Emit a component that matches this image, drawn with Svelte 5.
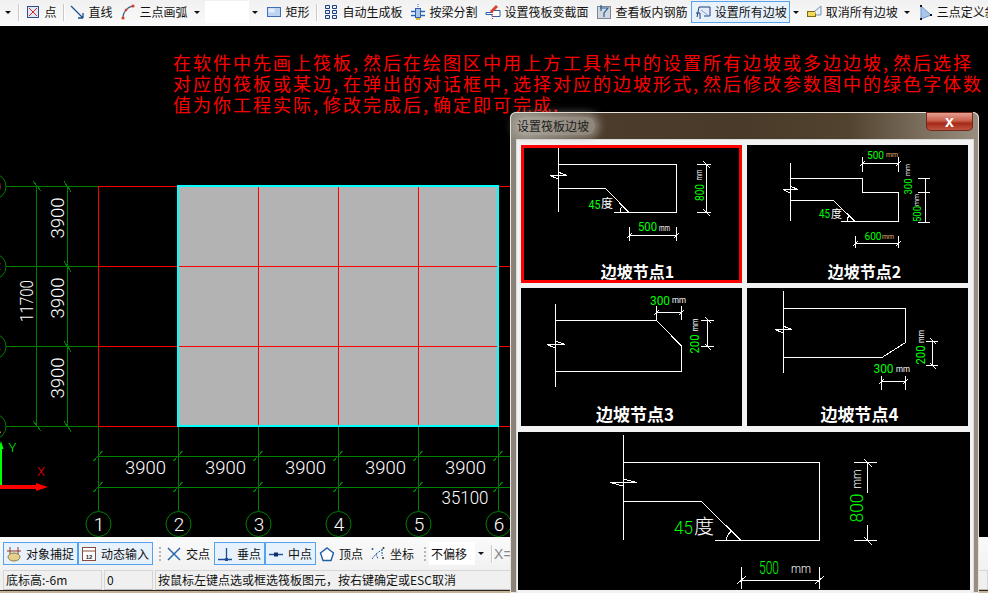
<script>
  const brk = (x, y, w, v) =>
    `M${x} ${y}H${x + w}M${x} ${y}L${v} ${y + 3.5}M${v} ${y - 3.5}L${x + w} ${y}`;

  const G = '#00ff00';
  const W = '#ffffff';
  const O = '#e8b070';

  const panels = [
    {
      vb: '521 145 221 138', cls: 'panel selected', title: '边坡节点1', tx: 637.5, ty: 271, ts: 16,
      d: 'M558.5 148V212M558.5 164.5H676.5V212.5H614M558.5 188.5H605.5L629 212.5M620 212A9 9 0 0 1 622.5 206' +
        brk(550, 175.5, 17, 558) +
        'M706.5 164V213M697 164.5H711M697 212.5H711M703 161L710 168M703 209L710 216' +
        'M630 235.5H676.5M629.5 227V241M676.5 227V241M627 238L632 233M674 238L679 233',
      texts: [
        { x: 594.5, y: 204, t: '45', s: 13, f: G, w: 12 },
        { x: 607, y: 204, t: '度', s: 12, f: W },
        { x: 699, y: 192.5, t: '800', s: 13, f: G, w: 17, r: 1 },
        { x: 699, y: 175, t: 'mm', s: 9, f: W, w: 11, r: 1 },
        { x: 647.5, y: 226.5, t: '500', s: 13, f: G, w: 19 },
        { x: 664.5, y: 228, t: 'mm', s: 9, f: W, w: 11 }
      ]
    },
    {
      vb: '747 145 221 138', cls: 'panel', title: '边坡节点2', tx: 864.5, ty: 271, ts: 16,
      d: 'M790.5 163V221M790.5 178.5H862.5V192.5H898.5V221.5H841M790.5 200.5H833.5L855 221.5M847 221A8 8 0 0 1 849 216' +
        brk(783, 189.5, 15, 790) +
        'M862.5 163H898.5M862.5 157V172M898.5 157V172M860 166L865 161M896 166L901 161' +
        'M925.5 178V222M918 178.5H930M918 192.5H930M918 222.5H930' +
        'M855.5 243.5H898.5M855.5 236V248M898.5 236V248M853 246L858 241M896 246L901 241',
      texts: [
        { x: 824.5, y: 214, t: '45', s: 12, f: G, w: 11 },
        { x: 836.5, y: 214, t: '度', s: 11, f: W },
        { x: 875.5, y: 155, t: '500', s: 11, f: G, w: 17 },
        { x: 892, y: 155, t: 'mm', s: 7, f: O, w: 12 },
        { x: 908, y: 186.5, t: '300', s: 11, f: G, w: 16, r: 1 },
        { x: 908, y: 170, t: 'mm', s: 7, f: W, w: 12, r: 1 },
        { x: 917, y: 214, t: '500', s: 11, f: G, w: 16, r: 1 },
        { x: 917, y: 200, t: 'mm', s: 7, f: W, w: 12, r: 1 },
        { x: 873, y: 236.5, t: '600', s: 11, f: G, w: 17 },
        { x: 888, y: 236.5, t: 'mm', s: 7, f: O, w: 12 }
      ]
    },
    {
      vb: '521 288 221 138', cls: 'panel', title: '边坡节点3', tx: 635, ty: 413.5, ts: 17,
      d: 'M555.5 304V386.5M555.5 320.5H656.5L681.5 346V371.5H555.5' +
        brk(547, 344.5, 18, 555) +
        'M656.5 312.5H681.5M656.5 306V320M681.5 306V320M654 315L659 310M679 315L684 310' +
        'M707.5 320V347M701 320.5H714M701 346.5H714M705 317L711 323M705 344L711 350',
      texts: [
        { x: 660, y: 300, t: '300', s: 13, f: G, w: 20 },
        { x: 679, y: 300, t: 'mm', s: 9, f: W, w: 14 },
        { x: 694.5, y: 344, t: '200', s: 13, f: G, w: 19, r: 1 },
        { x: 694.5, y: 325, t: 'mm', s: 9, f: W, w: 13, r: 1 }
      ]
    },
    {
      vb: '747 288 221 138', cls: 'panel', title: '边坡节点4', tx: 859.5, ty: 413.5, ts: 17,
      d: 'M783.5 291V372.5M783.5 308.5H905.5V342.5L882 357.5H783.5' +
        brk(775, 329.5, 17, 783) +
        'M932.5 341V366M926 341.5H938M926 365.5H938M930 338L936 344M930 363L936 369' +
        'M881.5 381.5H905.5M881.5 376V390M905.5 376V390M879 384L884 379M903 384L908 379',
      texts: [
        { x: 883.5, y: 368.5, t: '300', s: 13, f: G, w: 20 },
        { x: 903, y: 368.5, t: 'mm', s: 9, f: W, w: 14 },
        { x: 920.5, y: 355, t: '200', s: 13, f: G, w: 19, r: 1 },
        { x: 920.5, y: 336.5, t: 'mm', s: 9, f: W, w: 13, r: 1 }
      ]
    },
    {
      vb: '518 432 452 158', cls: 'panel wide', title: '', tx: 0, ty: 0, ts: 16,
      d: 'M623.5 435V539.5M623.5 462.5H819.5V540.5H715M623.5 501.5H701.5L741 540.5M726 540A15 15 0 0 1 731.5 531' +
        brk(610, 482.5, 27, 623) +
        'M867.5 462V492.5M867.5 524.5V540M854 462.5H877M854 540.5H877M864 459L872 467M864 537L872 545' +
        'M741.5 580H819.5M741.5 567V589M819.5 567V589M737 584L746 576M815 584L824 576',
      texts: [
        { x: 683.5, y: 527, t: '45', s: 19, f: G, w: 19, thin: 1 },
        { x: 704, y: 527, t: '度', s: 20, f: W, thin: 1 },
        { x: 856, y: 508, t: '800', s: 19, f: G, w: 29, r: 1, thin: 1 },
        { x: 856, y: 479, t: 'mm', s: 13, f: W, w: 19, r: 1, thin: 1 },
        { x: 769, y: 567.5, t: '500', s: 18, f: G, w: 20, thin: 1 },
        { x: 801, y: 568, t: 'mm', s: 13, f: W, w: 20, thin: 1 }
      ]
    }
  ];

  const cols = [98.5, 178.5, 258.5, 338.5, 418.5, 498.5];
  const rows = [186.5, 266.5, 346.5, 426.5];
  const notes = [
    { y: 62, t: '在软件中先画上筏板, 然后在绘图区中用上方工具栏中的设置所有边坡或多边边坡, 然后选择' },
    { y: 83, t: '对应的筏板或某边, 在弹出的对话框中, 选择对应的边坡形式, 然后修改参数图中的绿色字体数' },
    { y: 103.5, t: '值为你工程实际, 修改完成后, 确定即可完成.' }
  ];
  const spans = [145.5, 225.5, 305.5, 385.5, 465.5];
  const rowSpans = [218, 298, 378];
  const sideLabels = ['D', 'C', 'B', 'A'];
</script>

{#snippet icon(name)}
  <svg class="ico" viewBox="0 0 16 16" aria-hidden="true">
    {#if name === 'point'}
      <rect x="2.5" y="2.5" width="11" height="11" fill="#dfe9f6" stroke="#2c4f86" />
      <path d="M4 4L12 12M12 4L4 12" stroke="#d22" fill="none" />
    {:else if name === 'line'}
      <path d="M2 2L14 14M14 14V9M14 14H9" stroke="#1f4f8f" stroke-width="1.3" fill="none" />
    {:else if name === 'arc'}
      <path d="M3 14C3 8 7 3 13 2" stroke="#47658a" stroke-width="1.3" fill="none" />
      <circle cx="3" cy="14" r="1.6" fill="#d8432c" /><circle cx="13" cy="2" r="1.6" fill="#d8432c" /><circle cx="6" cy="6" r="1.3" fill="#d8432c" />
    {:else if name === 'rect'}
      <rect x="1.5" y="3.5" width="13" height="9" fill="#bcd3f2" stroke="#3f6fb5" />
      <rect x="2.5" y="4.5" width="6" height="4" fill="#e4eefb" />
    {:else if name === 'grid'}
      <path d="M2.5 1.5h4v3h-4zM9.5 1.5h4v3h-4zM2.5 6.5h4v3h-4zM9.5 6.5h4v3h-4zM2.5 11.5h4v3h-4zM9.5 11.5h4v3h-4z" fill="#e8effa" stroke="#1e3f78" />
    {:else if name === 'beam'}
      <path d="M1 7.5H15M1 11.5H15" stroke="#2d62b8" stroke-width="1.4" fill="none" />
      <rect x="5.5" y="4.5" width="5" height="9" fill="#a9c4ea" stroke="#2d62b8" />
      <path d="M8 0V3" stroke="#2d62b8" stroke-dasharray="1 1" fill="none" />
      <rect x="6" y="14" width="4" height="2" fill="#e2b73a" />
    {:else if name === 'section'}
      <path d="M1 8.5H7V6.5H15V12.5H7V10.5H1Z" fill="#fff" stroke="#2b5fa8" />
      <path d="M5 7L11 1L13 3L7 9Z" fill="#d9412b" />
      <path d="M7.5 8V16" stroke="#e03030" stroke-dasharray="1 1" fill="none" />
    {:else if name === 'rebar'}
      <rect x="1.5" y="2.5" width="13" height="12" fill="#cfd6dd" stroke="#7d8791" />
      <path d="M4 4H12L8 9V13M5 1V7" stroke="#2d5e96" stroke-width="1.2" fill="none" />
    {:else if name === 'slope'}
      <path d="M2 13L4 3H15V12H9" fill="#e3ecf8" stroke="#1e3f78" />
      <path d="M6 6L14 12" stroke="#7ba2d6" fill="none" />
      <path d="M1 9H5V15" stroke="#1e3f78" fill="none" />
    {:else if name === 'cancel'}
      <rect x="1.5" y="7.5" width="8" height="5" fill="#f2d95c" stroke="#7c6a14" />
      <path d="M9 7L15 2V11H10" fill="#e7eef8" stroke="#7891b3" />
    {:else if name === 'tri'}
      <path d="M4 2L14 11L4 15Z" fill="#a8c6ec" stroke="#6c95c9" />
      <rect x="3" y="1" width="2" height="2" fill="#111" /><rect x="13" y="10" width="2" height="2" fill="#111" /><rect x="3" y="14" width="2" height="2" fill="#111" />
    {:else if name === 'snap'}
      <path d="M1 5H15M4 1V8M12 1V8" stroke="#8a3b2a" fill="none" />
      <ellipse cx="8" cy="11" rx="6" ry="4" fill="#e3cf8e" stroke="#8d7a3e" />
    {:else if name === 'input'}
      <rect x="1.5" y="1.5" width="13" height="13" fill="#fff" stroke="#8a4a3a" />
      <path d="M2 5H14" stroke="#8a4a3a" fill="none" />
      <text x="8" y="13" class="tiny">12</text>
    {:else if name === 'cross'}
      <path d="M2 2L14 14M14 2L2 14" stroke="#1c5fa8" stroke-width="1.4" fill="none" />
    {:else if name === 'perp'}
      <path d="M1 13.5H15M9.5 2V13" stroke="#1c4f96" stroke-width="1.3" fill="none" />
      <rect x="8" y="12" width="3" height="3" fill="#1c4f96" />
    {:else if name === 'mid'}
      <path d="M1 8.5H15" stroke="#1c4f96" stroke-width="1.4" fill="none" />
      <rect x="6" y="6.5" width="4" height="4" fill="#0f2f66" />
    {:else if name === 'vertex'}
      <path d="M8 2L14.5 7L12 14.5H4L1.5 7Z" fill="#fff" stroke="#1c5fa8" stroke-width="1.4" />
    {:else if name === 'coord'}
      <path d="M2 13L6 8L8 13M6 8L13 3M12 3V10" stroke="#1c5fa8" fill="none" stroke-dasharray="2 1" />
      <circle cx="2.5" cy="3" r="1" fill="#1c5fa8" /><circle cx="13.5" cy="2" r="1" fill="#333" /><circle cx="13" cy="12" r="1" fill="#333" />
    {/if}
  </svg>
{/snippet}

{#snippet tool(name, label)}
  <div class="tool">{@render icon(name)}<span>{label}</span></div>
{/snippet}

{#snippet caret()}
  <span class="caret"></span>
{/snippet}

{#snippet panel(p)}
  <div class={p.cls}>
    <svg viewBox={p.vb} class="diagram">
      <path d={p.d} class="crisp" stroke="#fff" fill="none" />
      {#each p.texts as t}
        <text
          x={t.x} y={t.y} fill={t.f} font-size={t.s} class={t.thin ? 'dim thin' : 'dim'}
          transform={t.r ? `rotate(-90 ${t.x} ${t.y})` : undefined}
          textLength={t.w} lengthAdjust={t.w ? 'spacingAndGlyphs' : undefined}
        >{t.t}</text>
      {/each}
      {#if p.title}
        <text x={p.tx} y={p.ty} font-size={p.ts} class="ptitle">{p.title}</text>
      {/if}
    </svg>
  </div>
{/snippet}

<div class="app">
  <header class="toolbar">
    <div class="lead">{@render caret()}</div>
    <i class="sep"></i>
    {@render tool('point', '点')}
    <i class="sep s2"></i>
    {@render tool('line', '直线')}
    {@render tool('arc', '三点画弧')}
    {@render caret()}
    <div class="combo top-combo"><b></b>{@render caret()}</div>
    {@render tool('rect', '矩形')}
    <i class="sep s4"></i>
    {@render tool('grid', '自动生成板')}
    {@render tool('beam', '按梁分割')}
    {@render tool('section', '设置筏板变截面')}
    {@render tool('rebar', '查看板内钢筋')}
    <div class="tool on">{@render icon('slope')}<span>设置所有边坡</span></div>
    {@render caret()}
    {@render tool('cancel', '取消所有边坡')}
    {@render caret()}
    {@render tool('tri', '三点定义斜板')}
  </header>

  <main class="canvas">
    <svg class="cad" viewBox="0 26 988 511" aria-label="CAD drawing">
      <rect x="178" y="186" width="320" height="240" fill="#b3b3b3" />

      <g class="crisp" stroke="#008000" fill="none">
        {#each rows as y}
          <path d="M6 {y}H98" />
          <path d="M64 {y - 5}L71 {y + 5}" />
        {/each}
        <path d="M36.5 186V426M67.5 186V426" />
        <path d="M33 181L41 191M33 421L41 431" />
        {#each cols as x}
          <path d="M{x} 426V511" />
          <path d="M{x - 5} 461L{x + 4} 451M{x - 5} 492L{x + 4} 482" />
        {/each}
        <path d="M98 456.5H510M98 487.5H510" />
      </g>

      <g class="crisp" stroke="#ff0000" fill="none">
        {#each rows as y}<path d="M98 {y}H510" />{/each}
        {#each cols.slice(0, 5) as x}<path d="M{x} 186V426" />{/each}
      </g>
      <rect x="178" y="186" width="320" height="240" fill="none" stroke="#00ffff" stroke-width="2" />

      {#each cols as x, i}
        <circle cx={x} cy="524" r="12.5" fill="#000" stroke="#008000" />
        <text x={x + 0.5} y="524.5" class="cadnum axis">{i + 1}</text>
      {/each}
      {#each rows as y, i}
        <circle cx="-7" cy={y} r="13" fill="#000" stroke="#008000" />
        <text x="-5" y={y} class="cadnum axis">{sideLabels[i]}</text>
      {/each}

      {#each spans as x}
        <text {x} y="467" class="cadnum" textLength="41" lengthAdjust="spacingAndGlyphs">3900</text>
      {/each}
      <text x="465" y="497.5" class="cadnum" textLength="47" lengthAdjust="spacingAndGlyphs">35100</text>
      {#each rowSpans as y}
        <text x="57" {y} class="cadnum" transform="rotate(-90 57 {y})" textLength="41" lengthAdjust="spacingAndGlyphs">3900</text>
      {/each}
      <text x="26.5" y="301" class="cadnum" transform="rotate(-90 26.5 301)" textLength="42" lengthAdjust="spacingAndGlyphs">11700</text>

      <path d="M1 487V446" stroke="#00ff00" stroke-width="2" fill="none" />
      <path d="M1 441L3.5 449H-1.5Z" fill="#00ff00" />
      <text x="12.5" y="447" class="axis-y">Y</text>
      <path d="M0 487H38" stroke="#ff0000" stroke-width="4" fill="none" />
      <path d="M36 483L48 487L36 491Z" fill="#ff0000" />
      <text x="41" y="471" class="axis-x">X</text>

      {#each notes as n}
        <text x="173" y={n.y} class="note">{n.t}</text>
      {/each}
    </svg>
  </main>

  <section class="snapbar">
    <div class="tool on snap wide-snap">{@render icon('snap')}<span>对象捕捉</span></div>
    <div class="tool on snap wide-snap">{@render icon('input')}<span>动态输入</span></div>
    <i class="grip g1"></i>
    <div class="tool snap">{@render icon('cross')}<span>交点</span></div>
    <div class="tool on snap">{@render icon('perp')}<span>垂点</span></div>
    <div class="tool on snap">{@render icon('mid')}<span>中点</span></div>
    <div class="tool snap">{@render icon('vertex')}<span>顶点</span></div>
    <div class="tool snap">{@render icon('coord')}<span>坐标</span></div>
    <i class="grip g2"></i>
    <div class="combo snap-combo"><b>不偏移</b>{@render caret()}</div>
    <i class="sep s3"></i>
    <span class="xlabel">X=</span>
  </section>

  <footer class="status">
    <div class="cell c1">底标高:-6m</div>
    <div class="cell c2">0</div>
    <div class="cell c3">按鼠标左键点选或框选筏板图元，按右键确定或ESC取消</div>
  </footer>
  <div class="edge"></div>

  <aside class="dialog">
    <div class="titlebar">
      <span class="dtitle">设置筏板边坡</span>
      <span class="close">x</span>
    </div>
    <div class="body">
      <div class="quad">
        {#each panels.slice(0, 4) as p}
          {@render panel(p)}
        {/each}
      </div>
      {@render panel(panels[4])}
    </div>
  </aside>
</div>

<style>
  :global(body) { margin: 0; background: #000; }
  .app {
    position: relative;
    width: 988px;
    height: 593px;
    overflow: hidden;
    display: flex;
    flex-direction: column;
    font: 12px/1 "Noto Sans CJK SC", "Liberation Sans", sans-serif;
    color: #111;
  }
  .toolbar {
    height: 26px;
    flex: none;
    display: flex;
    align-items: center;
    white-space: nowrap;
    overflow: hidden;
    padding-bottom: 2px;
    box-sizing: border-box;
    background: linear-gradient(#f1f1f1, #fafafa);
  }
  .lead { flex: none; width: 18px; display: flex; justify-content: flex-end; padding-right: 4px; box-sizing: border-box; }
  .sep { flex: none; width: 1px; height: 17px; margin: 0 2px 0 0; background: #c9c9c9; box-shadow: 1px 0 #fff; }
  .s2 { margin: 0 1px 0 3px; }
  .s4 { margin: 0 2px 0 3px; }
  .s3 { margin: 0 2px 0 4px; height: 18px; }
  .tool {
    flex: none;
    height: 22px;
    padding: 0 3.5px;
    display: flex;
    align-items: center;
    gap: 4px;
    box-sizing: border-box;
  }
  .tool.on { background: #e8f2fc; box-shadow: inset 0 0 0 1px #55a3ee; }
  .ico { width: 16px; height: 16px; flex: none; display: block; }
  .tiny { font: 700 6px "Liberation Sans", sans-serif; text-anchor: middle; fill: #222; }
  .caret {
    flex: none;
    display: block;
    width: 0;
    height: 0;
    margin: 0 3px;
    border: 3px solid transparent;
    border-top: 3.5px solid #111;
    border-bottom: 0;
  }
  .combo { display: flex; align-items: center; flex: none; box-sizing: border-box; height: 22px; }
  .combo b { font-weight: 400; display: flex; align-items: center; height: 100%; background: #fff; box-sizing: border-box; padding-left: 2px; flex: none; }
  .combo .caret { margin: 0 auto; }
  .top-combo { width: 55px; margin: 0 2px; }
  .top-combo b { width: 44px; }
  .canvas { flex: 1; min-height: 0; background: #000; }
  .cad { display: block; width: 988px; height: 511px; overflow: hidden; }
  .crisp { shape-rendering: crispEdges; }
  .cadnum {
    font-family: "Roboto", "Liberation Sans", sans-serif;
    font-weight: 300;
    font-size: 19px;
    fill: #fff;
    text-anchor: middle;
    dominant-baseline: central;
  }
  .axis { font-size: 19px; }
  .axis-y, .axis-x {
    font-family: "Roboto", sans-serif;
    font-weight: 300;
    font-size: 13px;
    text-anchor: middle;
    dominant-baseline: central;
  }
  .axis-y { fill: #00ff00; }
  .axis-x { fill: #ff0000; }
  .note {
    font-family: "Noto Sans CJK SC", sans-serif;
    font-size: 18px;
    letter-spacing: 2px;
    word-spacing: -3px;
    fill: #f00;
    dominant-baseline: central;
  }
  .snapbar {
    height: 33px;
    flex: none;
    display: flex;
    align-items: center;
    padding-left: 3px;
    box-sizing: border-box;
    white-space: nowrap;
    background: linear-gradient(#fafafa, #f1f1f1);
  }
  .tool.snap { height: 23px; padding: 0 4px 0 3px; }
  .tool.wide-snap { width: 75px; }
  .grip {
    flex: none;
    width: 2px;
    height: 14px;
    background: repeating-linear-gradient(#b5b5b5 0 2px, transparent 2px 4px);
  }
  .g1 { margin: 0 2px 0 6px; }
  .g2 { margin: 0 3px 0 6px; }
  .snap-combo { width: 58px; height: 23px; }
  .snap-combo b { width: 46px; }
  .xlabel { color: #888; font-size: 14px; font-family: "Liberation Sans", sans-serif; }
  .status {
    height: 20px;
    flex: none;
    display: flex;
    gap: 2px;
    padding-left: 3px;
    box-sizing: border-box;
    background: #f0f0f0;
  }
  .cell {
    display: flex;
    align-items: center;
    padding-left: 2px;
    box-sizing: border-box;
    border: 1px solid #d6d6d6;
    border-bottom-color: #bdbdbd;
    font-size: 12px;
    white-space: nowrap;
  }
  .c1 { width: 99px; }
  .c2 { width: 49px; }
  .c3 { flex: 1; }
  .edge { height: 3px; flex: none; background: linear-gradient(#2a2620 0 1px, #c5b49a 1px); }

  .dialog {
    position: absolute;
    left: 510px;
    top: 112px;
    width: 469px;
    height: 481px;
    box-sizing: border-box;
    display: flex;
    flex-direction: column;
    border-radius: 6px 6px 0 0;
    box-shadow: inset 0 0 0 1px #e8e4dc;
    background: linear-gradient(90deg, #8c877d 0, #4b3c2c 16%, #4a3a29 50%, #52432f 72%, #9a8f80 100%);
  }
  .titlebar { height: 28px; flex: none; position: relative; display: flex; align-items: center; padding-left: 7px; }
  .dtitle { color: #1c1c1c; font-size: 12px; padding: 3px 6px 3px 0; border-radius: 8px; background: rgba(200, 196, 188, .55); box-shadow: 0 0 8px 4px rgba(200, 196, 188, .55); }
  .close {
    position: absolute;
    right: 6px;
    top: 0;
    width: 47px;
    height: 19px;
    border-radius: 0 0 5px 5px;
    display: flex;
    align-items: center;
    justify-content: center;
    color: #fff;
    font: 700 16px/1 "Liberation Sans", sans-serif;
    background: linear-gradient(#e7a89b 0, #c9604c 45%, #a62a17 60%, #c45a44 100%);
    box-shadow: inset 0 0 0 1px #6d2a1d;
  }
  .body {
    flex: 1;
    min-height: 0;
    margin: 0 6px 0 7px;
    padding: 5px 3px 0 1px;
    background: #f2f2f2;
    box-sizing: border-box;
    display: flex;
    flex-direction: column;
    gap: 6px;
    box-shadow: 0 0 0 1px #dcdcdc;
  }
  .quad { display: grid; grid-template-columns: 221px 221px; grid-auto-rows: 138px; gap: 5px; margin: 0 3px; flex: none; }
  .panel { background: #000; overflow: hidden; }
  .panel.selected { outline: 3px solid #f00; outline-offset: -3px; }
  .panel.wide { width: 452px; height: 158px; flex: none; }
  .diagram { display: block; width: 100%; height: 100%; }
  .dim {
    font-family: "Roboto", "Liberation Sans", "Noto Sans CJK SC", sans-serif;
    font-weight: 400;
    text-anchor: middle;
    dominant-baseline: central;
  }
  .dim.thin { font-weight: 300; }
  .ptitle {
    font-family: "Noto Sans CJK SC", sans-serif;
    font-weight: 700;
    fill: #fff;
    text-anchor: middle;
    dominant-baseline: central;
  }
</style>
